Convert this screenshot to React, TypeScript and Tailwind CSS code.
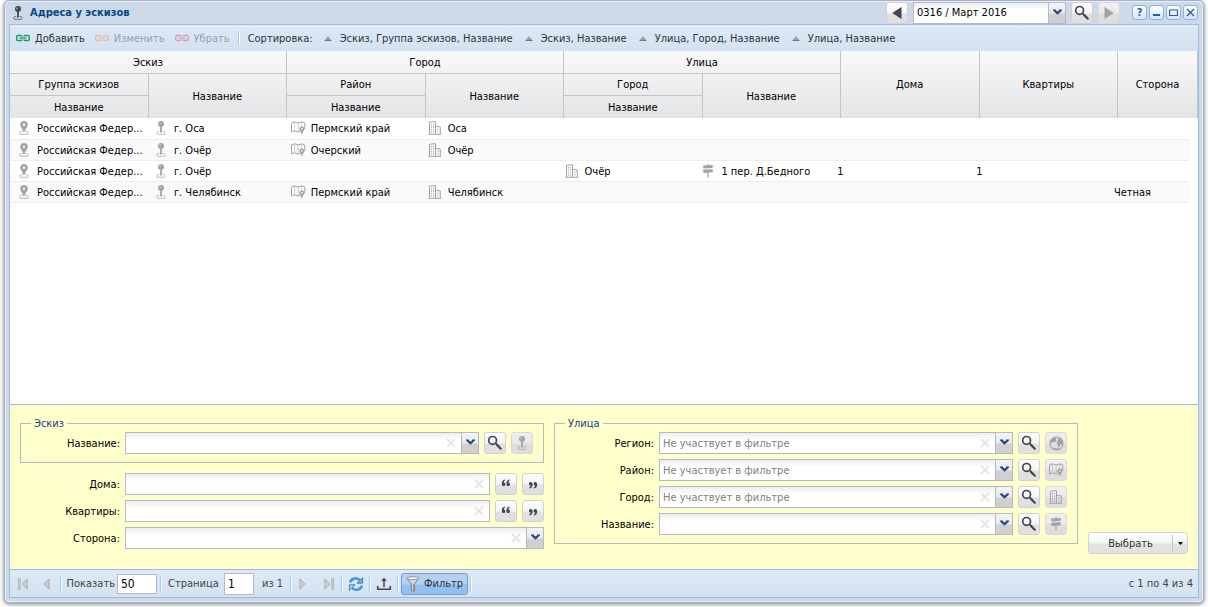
import React, { useId, useState } from "react";
import type { ReactNode } from "react";

const DARK = "#444455";

function IconJoystick({ color = DARK }: { color?: string }) {
  return (
    <svg width="14" height="14" viewBox="0 0 14 14" fill="none" aria-hidden="true">
      <circle cx="7" cy="3.1" r="3" fill={color} />
      <circle cx="6" cy="2.2" r="0.8" fill="#fff" fillOpacity="0.7" />
      <path d="M7 5.5V11.4" stroke={color} strokeWidth="1.8" />
      <path d="M5.3 10.6H3.8C2.7 10.6 2.5 13.3 3.6 13.3H10.4C11.5 13.3 11.3 10.6 10.2 10.6H8.7" stroke={color} strokeWidth="1" strokeOpacity="0.7" />
    </svg>
  );
}

function IconPin() {
  return (
    <svg width="14" height="14" viewBox="0 0 14 14" fill="none" aria-hidden="true">
      <path d="M7 0C4.7 0 3.2 1.6 3.2 3.7C3.2 6 5.8 7.6 6.3 11H7.7C8.2 7.6 10.8 6 10.8 3.7C10.8 1.6 9.3 0 7 0ZM7 2.5A1.2 1.2 0 1 1 7 4.9A1.2 1.2 0 0 1 7 2.5Z" fill="#a2a2aa" fillRule="evenodd" />
      <path d="M5.3 10.6H3.8C2.7 10.6 2.5 13.3 3.6 13.3H10.4C11.5 13.3 11.3 10.6 10.2 10.6H8.7" stroke="#a2a2aa" strokeWidth="1" strokeOpacity="0.8" />
    </svg>
  );
}

function IconMap({ color = "#a2a2aa" }: { color?: string }) {
  return (
    <svg width="15" height="14" viewBox="0 0 15 14" fill="none" aria-hidden="true">
      <path d="M0.5 2L3.5 0.8L7.2 2L10.5 0.8L13.8 2V8" stroke={color} />
      <path d="M0.5 2V11L3.5 9.8L7.2 11L9 10.3" stroke={color} />
      <path d="M3.5 1V9.8M7.2 2V11M10.5 1V5.5" stroke={color} strokeOpacity="0.5" />
      <path d="M10.9 5.4C9.3 5.4 8.3 6.4 8.3 7.8C8.3 9.5 10.4 11 10.9 14C11.4 11 13.5 9.5 13.5 7.8C13.5 6.4 12.5 5.4 10.9 5.4ZM10.9 6.9A0.9 0.9 0 1 1 10.9 8.7A0.9 0.9 0 0 1 10.9 6.9Z" fill={color} fillRule="evenodd" />
    </svg>
  );
}

function IconBuildings({ color = "#a2a2aa" }: { color?: string }) {
  return (
    <svg width="14" height="14" viewBox="0 0 14 14" fill="none" aria-hidden="true">
      <path d="M1.5 13V1.3L7.5 0.6V13" stroke={color} />
      <path d="M7.5 5.3L12.3 6V13M0.3 13.3H13.2" stroke={color} />
      <path d="M3.5 3V12M5.5 3V12" stroke={color} strokeDasharray="1.4 1.1" strokeOpacity="0.85" />
      <path d="M10 7.5V12" stroke={color} strokeDasharray="1.4 1.1" />
    </svg>
  );
}

function IconSigns({ color = "#a2a2aa" }: { color?: string }) {
  return (
    <svg width="14" height="14" viewBox="0 0 14 14" fill="none" aria-hidden="true">
      <path d="M7 0V1.5M7 8V13.6" stroke={color} strokeWidth="1.6" strokeOpacity="0.8" />
      <path d="M2 1.6L11 0.9L12.4 2.2L11 4L2.4 4.6Z" fill={color} />
      <path d="M1.6 7L3 5.6L11.8 5.2V8.2L3 8.9Z" fill={color} />
    </svg>
  );
}

function IconGlobe() {
  return (
    <svg width="15" height="15" viewBox="0 0 15 15" fill="none" aria-hidden="true">
      <circle cx="7.5" cy="7.5" r="6.5" stroke="#a2a2aa" strokeWidth="1.1" />
      <path d="M2 4.2L4.5 1.9L8 1.6L7 3.5L7.6 5L5.4 6.6L3.4 6L1.5 8L1.2 6Z" fill="#a2a2aa" />
      <path d="M9.4 1.7L12 2.7L13.7 6L13 9.6L11.4 8L10.4 11.4L8.8 10.6L8.8 8L7.4 6.9L8.8 4.6Z" fill="#a2a2aa" />
      <path d="M3.4 11.6L7.5 12.6L11 11.9L8.5 13.8L5 13.4Z" fill="#a2a2aa" />
    </svg>
  );
}

function IconSearch() {
  return (
    <svg width="16" height="16" viewBox="0 0 16 16" fill="none" aria-hidden="true">
      <circle cx="5.6" cy="5.4" r="3.9" stroke={DARK} strokeWidth="1.7" />
      <path d="M8.6 8.4L10 9.8" stroke={DARK} strokeWidth="1.6" />
      <path d="M10 9.9L13.8 13.7" stroke={DARK} strokeWidth="2.2" strokeLinecap="round" />
    </svg>
  );
}

function IconQuote({ closing = false }: { closing?: boolean }) {
  return (
    <svg width="14" height="14" viewBox="0 0 14 14" aria-hidden="true" className={closing ? "rotate-180" : ""}>
      <path d="M6 2.4C4 2.8 2.8 4.3 2.8 6.4C2.8 8 3.5 9 4.7 9C5.8 9 6.4 8.2 6.4 7.2C6.4 6.2 5.8 5.6 4.9 5.5C4.9 4.5 5.4 3.7 6.3 3.3Z" fill={DARK} />
      <path d="M10.6 2.4C8.6 2.8 7.4 4.3 7.4 6.4C7.4 8 8.1 9 9.3 9C10.4 9 11 8.2 11 7.2C11 6.2 10.4 5.6 9.5 5.5C9.5 4.5 10 3.7 10.9 3.3Z" fill={DARK} />
    </svg>
  );
}

function IconLink({ color }: { color: string }) {
  return (
    <svg width="14" height="14" viewBox="0 0 14 14" fill="none" stroke={color} strokeWidth="1.3" aria-hidden="true">
      <path d="M6 5.6C6 4.8 5.6 4.5 5 4.5H1.9C1.1 4.5 0.7 4.9 0.7 5.6V8.4C0.7 9.1 1.1 9.5 1.9 9.5H5C5.6 9.5 6 9.2 6 8.4" />
      <path d="M8 5.6C8 4.8 8.4 4.5 9 4.5H12.1C12.9 4.5 13.3 4.9 13.3 5.6V8.4C13.3 9.1 12.9 9.5 12.1 9.5H9C8.4 9.5 8 9.2 8 8.4" />
      <path d="M3.6 7H10.4" />
    </svg>
  );
}

function IconSortUp() {
  return (
    <svg width="8" height="6" viewBox="0 0 8 6" className="mt-[2px]" aria-hidden="true">
      <path d="M4 0L7.6 4.4H0.4Z" fill="#a2a2a2" />
      <path d="M0.6 3.9H7.4V4.9H0.6Z" fill="#6c6c6c" />
    </svg>
  );
}

function IconTriangle({ right = false }: { right?: boolean }) {
  return (
    <svg width="10" height="14" viewBox="0 0 10 14" aria-hidden="true">
      <path d={right ? "M0.5 1L9.8 7L0.5 13Z" : "M9.5 1L0.2 7L9.5 13Z"} fill={right ? "#a0a0a8" : DARK} />
    </svg>
  );
}

function IconPage({ right = false, edge = false }: { right?: boolean; edge?: boolean }) {
  return (
    <svg width="12" height="12" viewBox="0 0 12 12" aria-hidden="true" className={right ? "rotate-180" : ""}>
      {edge && <path d="M1.4 0.6H3.2V11.4H1.4Z" fill="#cdd1d6" stroke="#a9adb3" strokeWidth="0.8" />}
      <path d="M10.2 1V11L5 6Z" fill="#c9cdd2" stroke="#a3a7ad" strokeWidth="0.8" />
    </svg>
  );
}

function IconRefresh() {
  return (
    <svg width="16" height="16" viewBox="0 0 16 16" fill="none" aria-hidden="true">
      <path d="M2.2 6.4C3.4 2.4 8.6 1.2 11.6 4.2" stroke="#2f80d8" strokeWidth="2.6" />
      <path d="M3 6C4.4 3 8.4 2.2 11 4.6" stroke="#8fc8fb" strokeWidth="0.9" />
      <path d="M14.6 1.6V7.2H9Z" fill="#6db5f5" stroke="#1d6fc6" strokeWidth="0.8" />
      <path d="M13.8 9.6C12.6 13.6 7.4 14.8 4.4 11.8" stroke="#2f80d8" strokeWidth="2.6" />
      <path d="M13 10C11.6 13 7.6 13.8 5 11.4" stroke="#b5dcfd" strokeWidth="0.9" />
      <path d="M1.4 14.4V8.8H7Z" fill="#a9d6fb" stroke="#1d6fc6" strokeWidth="0.8" />
    </svg>
  );
}

function IconExport() {
  return (
    <svg width="16" height="16" viewBox="0 0 16 16" fill="none" aria-hidden="true">
      <path d="M1.7 10V13.3H14.3V10" stroke={DARK} strokeWidth="1.6" />
      <path d="M8 11V4" stroke={DARK} strokeWidth="1.5" />
      <path d="M8 1.6L10.8 5H5.2Z" fill={DARK} />
    </svg>
  );
}

function IconFunnel() {
  return (
    <svg width="14" height="16" viewBox="0 0 14 16" aria-hidden="true">
      <path d="M1.2 2.4L5.4 8V14.8L8.4 15.2V8L12.8 2.4Z" fill="#d6d8da" stroke="#77797c" strokeWidth="0.9" />
      <path d="M7.4 8V14.4" stroke="#909295" strokeWidth="1" />
      <ellipse cx="7" cy="2.2" rx="6" ry="1.5" fill="#f4f4f4" stroke="#85878a" strokeWidth="0.8" />
    </svg>
  );
}

function IconChevron() {
  return (
    <svg width="9" height="6" viewBox="0 0 9 6" aria-hidden="true">
      <path d="M0 0.5H3V1.5L4.5 2.6L6 1.5V0.5H9V1.6L4.5 5.8L0 1.6Z" fill="#264888" />
    </svg>
  );
}

function IconClear() {
  return (
    <svg width="10" height="10" viewBox="0 0 10 10" stroke="#e6e6e6" strokeWidth="2" aria-hidden="true">
      <path d="M1 1L9 9M9 1L1 9" />
    </svg>
  );
}

function ToolGlyph({ kind }: { kind: "help" | "min" | "max" | "close" }) {
  return (
    <svg width="9" height="9" viewBox="0 0 9 9" fill="none" stroke="#2e5aac" aria-hidden="true">
      {kind === "min" && <path d="M1 7H8" strokeWidth="2" />}
      {kind === "max" && <path d="M0.5 1.8V7.5H8.5V1.8M0 2H9" strokeWidth="1.2" />}
      {kind === "close" && <path d="M1 1L8 8M8 1L1 8" strokeWidth="1.4" />}
    </svg>
  );
}

function ToolButton({ label, kind }: { label: string; kind: "help" | "min" | "max" | "close" }) {
  return (
    <button type="button" aria-label={label} className="flex size-[15px] items-center justify-center rounded-[3px] border border-[#8fb0dd] bg-linear-to-b from-white to-[#d3e4fa] text-[11px] leading-[13px] font-bold text-[#2e5aac]">
      {kind === "help" ? "?" : <ToolGlyph kind={kind} />}
    </button>
  );
}

function SquareButton({ label, disabled = false, children }: { label: string; disabled?: boolean; children: ReactNode }) {
  return (
    <button
      type="button"
      aria-label={label}
      disabled={disabled}
      className="flex size-[22px] shrink-0 items-center justify-center rounded-[3px] border border-[#d1d1d1] bg-linear-to-b from-white from-0% via-[#f3f3f3] via-50% to-[#e0e0e0] to-55% disabled:border-[#d9d9d9] disabled:from-[#f0f0f0] disabled:via-[#e9e9e9] disabled:to-[#dedede]"
    >
      {children}
    </button>
  );
}

const fieldClass =
  "h-[22px] w-full min-w-0 appearance-none border border-[#b5b8c8] bg-linear-to-b from-[#eceeee] from-0% to-white to-35% px-[3px] text-[11px] outline-none";

function ComboBox({ id, label, value = "", clearable = true }: { id?: string; label?: string; value?: string; clearable?: boolean }) {
  return (
    <div className="relative min-w-0 flex-1">
      <select id={id} aria-label={label} className={`${fieldClass} ${clearable ? "text-[#808080]" : "text-black"}`}>
        <option>{value}</option>
      </select>
      <span className="pointer-events-none absolute top-0 right-0 flex h-[22px] w-[18px] items-center justify-center border border-[#b5b8c8] bg-linear-to-b from-[#f4f4f4] from-0% via-[#e9e9e9] via-50% to-[#d0d0d0] to-55% pb-[2px]">
        <IconChevron />
      </span>
      {clearable && (
        <span className="pointer-events-none absolute top-[6px] right-[23px]">
          <IconClear />
        </span>
      )}
    </div>
  );
}

function TextBox({ id }: { id: string }) {
  return (
    <div className="relative min-w-0 flex-1">
      <input id={id} type="text" className={fieldClass} />
      <span className="pointer-events-none absolute top-[6px] right-[6px]">
        <IconClear />
      </span>
    </div>
  );
}

function FieldRow({ label, nested = false, children }: { label: string; nested?: boolean; children: (id: string) => ReactNode }) {
  const id = useId();
  return (
    <div className="flex items-center gap-[5px]">
      <label htmlFor={id} className={`shrink-0 text-right ${nested ? "w-[89px]" : "w-[100px]"}`}>
        {label}:
      </label>
      {children(id)}
    </div>
  );
}

function FieldGroup({ title, children }: { title: string; children: ReactNode }) {
  return (
    <fieldset className="min-w-0 border border-[#b5b8c8] px-[10px] pt-[2px] pb-2">
      <legend className="px-[3px] leading-[13px] text-[#15428b]">{title}</legend>
      <div className="flex flex-col gap-[5px]">{children}</div>
    </fieldset>
  );
}

function Separator() {
  return <span className="h-[14px] w-[2px] shrink-0 border-l border-[#98c8ff] bg-white" />;
}

function ActionButton({ color, label, disabled = false }: { color: string; label: string; disabled?: boolean }) {
  return (
    <button type="button" disabled={disabled} className="flex items-center gap-[5px] disabled:opacity-40">
      <IconLink color={color} />
      {label}
    </button>
  );
}

const sortings = ["Эскиз, Группа эскизов, Название", "Эскиз, Название", "Улица, Город, Название", "Улица, Название"];

interface Row {
  group: string;
  sketch: string;
  district?: string;
  city?: string;
  streetCity?: string;
  street?: string;
  houses?: string;
  flats?: string;
  side?: string;
}

const group = "Российская Федер...";

const rows: Row[] = [
  { group, sketch: "г. Оса", district: "Пермский край", city: "Оса" },
  { group, sketch: "г. Очёр", district: "Очерский", city: "Очёр" },
  { group, sketch: "г. Очёр", streetCity: "Очёр", street: "1 пер. Д.Бедного", houses: "1", flats: "1" },
  { group, sketch: "г. Челябинск", district: "Пермский край", city: "Челябинск", side: "Четная" },
];

function IconCell({ icon, text }: { icon: ReactNode; text?: string }) {
  return (
    <td className="p-0">
      {text && (
        <div className="flex items-center pl-[7px]">
          <span className="w-5 shrink-0">{icon}</span>
          <span className="pt-px whitespace-nowrap">{text}</span>
        </div>
      )}
    </td>
  );
}

function HeaderCell({ children, colSpan, rowSpan, top = false }: { children: ReactNode; colSpan?: number; rowSpan?: number; top?: boolean }) {
  return (
    <th colSpan={colSpan} rowSpan={rowSpan} className={`border-r border-[#c5c5c5] p-0 font-normal ${top ? "" : "border-t"}`}>
      {children}
    </th>
  );
}

function Grid() {
  return (
    <div className="flex-1 bg-white">
      <table className="w-full table-fixed border-separate border-spacing-0 bg-linear-to-b from-[#f9f9f9] to-[#e3e4e6] text-center">
        <colgroup>
          <col /><col /><col /><col /><col /><col /><col /><col />
          <col className="w-20" />
        </colgroup>
        <thead>
          <tr className="h-[22px]">
            <HeaderCell colSpan={2} top>Эскиз</HeaderCell>
            <HeaderCell colSpan={2} top>Город</HeaderCell>
            <HeaderCell colSpan={2} top>Улица</HeaderCell>
            <HeaderCell rowSpan={3} top>Дома</HeaderCell>
            <HeaderCell rowSpan={3} top>Квартиры</HeaderCell>
            <HeaderCell rowSpan={3} top>Сторона</HeaderCell>
          </tr>
          <tr className="h-[22px]">
            <HeaderCell>Группа эскизов</HeaderCell>
            <HeaderCell rowSpan={2}>Название</HeaderCell>
            <HeaderCell>Район</HeaderCell>
            <HeaderCell rowSpan={2}>Название</HeaderCell>
            <HeaderCell>Город</HeaderCell>
            <HeaderCell rowSpan={2}>Название</HeaderCell>
          </tr>
          <tr className="h-[23px]">
            <HeaderCell>Название</HeaderCell>
            <HeaderCell>Название</HeaderCell>
            <HeaderCell>Название</HeaderCell>
          </tr>
        </thead>
      </table>
      <div className="pr-[9px]">
        <table className="w-full table-fixed border-collapse" aria-label="Адреса у эскизов">
          <colgroup>
            <col className="w-[11.61%]" /><col className="w-[11.61%]" /><col className="w-[11.61%]" />
            <col className="w-[11.61%]" /><col className="w-[11.61%]" /><col className="w-[11.61%]" />
            <col className="w-[11.78%]" /><col className="w-[11.69%]" />
            <col />
          </colgroup>
          <tbody>
            {rows.map((row, index) => (
              <tr key={index} className="h-[21px] border-b border-[#ededed] even:bg-[#fafafa]">
                <IconCell icon={<IconPin />} text={row.group} />
                <IconCell icon={<IconJoystick color="#a2a2aa" />} text={row.sketch} />
                <IconCell icon={<IconMap />} text={row.district} />
                <IconCell icon={<IconBuildings />} text={row.city} />
                <IconCell icon={<IconBuildings />} text={row.streetCity} />
                <IconCell icon={<IconSigns />} text={row.street} />
                <td className="px-[6px] pt-px pb-0">{row.houses}</td>
                <td className="px-[6px] pt-px pb-0">{row.flats}</td>
                <td className="px-[6px] pt-px pb-0">{row.side}</td>
              </tr>
            ))}
          </tbody>
        </table>
      </div>
    </div>
  );
}

function FilterPanel() {
  return (
    <section aria-label="Фильтр" className="flex items-end gap-[10px] border-t border-[#99bbe8] bg-[#ffffcc] px-[10px] pt-3 pb-[15px]">
      <div className="flex min-w-0 flex-1 flex-col gap-[10px] self-start pb-[5px]">
        <FieldGroup title="Эскиз">
          <FieldRow label="Название" nested>
            {(id) => (
              <>
                <ComboBox id={id} />
                <SquareButton label="Найти эскиз"><IconSearch /></SquareButton>
                <SquareButton label="Открыть эскиз" disabled><IconJoystick color="#a2a2aa" /></SquareButton>
              </>
            )}
          </FieldRow>
        </FieldGroup>
        <div className="flex flex-col gap-[5px]">
          {["Дома", "Квартиры"].map((label) => (
            <FieldRow key={label} label={label}>
              {(id) => (
                <>
                  <TextBox id={id} />
                  <SquareButton label="Начинается с"><IconQuote /></SquareButton>
                  <SquareButton label="Заканчивается на"><IconQuote closing /></SquareButton>
                </>
              )}
            </FieldRow>
          ))}
          <FieldRow label="Сторона">{(id) => <ComboBox id={id} />}</FieldRow>
        </div>
      </div>
      <div className="min-w-0 flex-1 self-start">
        <FieldGroup title="Улица">
          {[
            { label: "Регион", value: "Не участвует в фильтре", icon: <IconGlobe /> },
            { label: "Район", value: "Не участвует в фильтре", icon: <IconMap /> },
            { label: "Город", value: "Не участвует в фильтре", icon: <IconBuildings /> },
            { label: "Название", value: "", icon: <IconSigns /> },
          ].map((field) => (
            <FieldRow key={field.label} label={field.label} nested>
              {(id) => (
                <>
                  <ComboBox id={id} value={field.value} />
                  <SquareButton label={`Найти: ${field.label}`}><IconSearch /></SquareButton>
                  <SquareButton label={`Открыть: ${field.label}`} disabled>{field.icon}</SquareButton>
                </>
              )}
            </FieldRow>
          ))}
        </FieldGroup>
      </div>
      <div className="flex h-[22px] w-[100px] shrink-0 items-center rounded-[3px] border border-[#d1d1d1] bg-linear-to-b from-white from-0% via-[#f4f4f4] via-50% to-[#e2e2e2] to-55%">
        <button type="button" className="h-full flex-1 text-[#333]">Выбрать</button>
        <button type="button" aria-label="Другие действия" className="flex h-4 w-[15px] items-center justify-center border-l border-[#c4c4c4]">
          <svg width="5" height="3" viewBox="0 0 5 3" aria-hidden="true"><path d="M0 0H5L2.5 3Z" fill="#000" /></svg>
        </button>
      </div>
    </section>
  );
}

function PagingBar({ filtered, onToggle }: { filtered: boolean; onToggle: () => void }) {
  const input = "border border-[#b5b8c8] bg-white px-[3px] text-[12px] text-black outline-none";
  return (
    <footer className="flex h-[28px] items-center border-t border-[#99bbe8] bg-linear-to-b from-[#dfe9f5] to-[#d3e1f1] pr-[5px] pl-[7px] text-[#444]">
      <div className="flex w-[43px] gap-[10px]">
        <button type="button" disabled aria-label="Первая страница"><IconPage edge /></button>
        <button type="button" disabled aria-label="Предыдущая страница"><IconPage /></button>
      </div>
      <Separator />
      <div className="flex w-[98px] items-center">
        <label htmlFor="page-size" className="w-[55px] pr-[2px] text-right">Показать</label>
        <input id="page-size" type="text" defaultValue="50" className={`${input} h-5 w-10`} />
      </div>
      <Separator />
      <div className="flex w-[128px] items-center">
        <label htmlFor="page-number" className="w-[62px] pl-[6px]">Страница</label>
        <input id="page-number" type="text" defaultValue="1" className={`${input} h-[22px] w-[30px]`} />
        <span className="pl-2">из 1</span>
      </div>
      <Separator />
      <div className="flex w-[49px] items-center justify-between px-[6px]">
        <button type="button" disabled aria-label="Следующая страница"><IconPage right /></button>
        <button type="button" disabled aria-label="Последняя страница"><IconPage right edge /></button>
      </div>
      <Separator />
      <button type="button" aria-label="Обновить" className="flex w-[26px] justify-center"><IconRefresh /></button>
      <Separator />
      <button type="button" aria-label="Выгрузить" className="flex w-[26px] justify-center"><IconExport /></button>
      <Separator />
      <button
        type="button"
        aria-pressed={filtered}
        onClick={onToggle}
        className="mx-[2px] flex h-[22px] w-[67px] items-center gap-1 rounded-[3px] border border-[#7a9ac4] bg-linear-to-b from-[#b8cfee] from-0% via-[#b3d0f3] via-50% to-[#93c0f3] to-55% pl-1 text-[#333]"
      >
        <IconFunnel />
        Фильтр
      </button>
      <Separator />
      <span className="flex-1 text-right">с 1 по 4 из 4</span>
    </footer>
  );
}

export default function App() {
  const [filtered, setFiltered] = useState(true);
  return (
    <div className="flex min-h-screen bg-white pr-1 pb-1 pl-1 font-['DejaVu_Sans_Condensed',Roboto,sans-serif] text-[11px] leading-[13px] text-black">
      <main className="flex min-w-0 flex-1 flex-col rounded-[5px] border border-[#a2b1cd] bg-[#ced9e7] px-1 pb-[4px] shadow-[0_1px_4px_rgba(0,0,0,0.55)] inset-shadow-[0_0_0_1px_#e9f0f9]">
        <header className="flex h-[23px] items-center pr-px pl-[2px]">
          <IconJoystick />
          <h1 className="flex-1 pl-[5px] font-bold text-[#04468c]">Адреса у эскизов</h1>
          <div className="flex items-center gap-[5px]">
            <SquareButton label="Предыдущий период"><IconTriangle /></SquareButton>
            <div className="flex w-[153px]">
              <ComboBox label="Период" value="0316 / Март 2016" clearable={false} />
            </div>
            <SquareButton label="Выбрать период"><IconSearch /></SquareButton>
            <SquareButton label="Следующий период" disabled><IconTriangle right /></SquareButton>
          </div>
          <div className="flex gap-[2px] pl-3">
            <ToolButton label="Справка" kind="help" />
            <ToolButton label="Свернуть" kind="min" />
            <ToolButton label="Развернуть" kind="max" />
            <ToolButton label="Закрыть" kind="close" />
          </div>
        </header>
        <div className="flex flex-1 flex-col border border-[#99bbe8]">
          <div className="flex h-[26px] items-center bg-linear-to-b from-[#dfe9f5] to-[#d3e1f1] pl-[6px] text-[#333]">
            <div className="flex gap-[10px]">
              <ActionButton color="#0f9a5f" label="Добавить" />
              <ActionButton color="#f08a24" label="Изменить" disabled />
              <ActionButton color="#d8345f" label="Убрать" disabled />
            </div>
            <div className="flex items-center pl-2">
              <Separator />
              <span className="w-[84px] pl-2">Сортировка:</span>
            </div>
            <div className="flex gap-[12px]">
              {sortings.map((label) => (
                <button key={label} type="button" className="flex items-center gap-2">
                  <IconSortUp />
                  {label}
                </button>
              ))}
            </div>
          </div>
          <Grid />
          <FilterPanel />
          <PagingBar filtered={filtered} onToggle={() => setFiltered(!filtered)} />
        </div>
      </main>
    </div>
  );
}
